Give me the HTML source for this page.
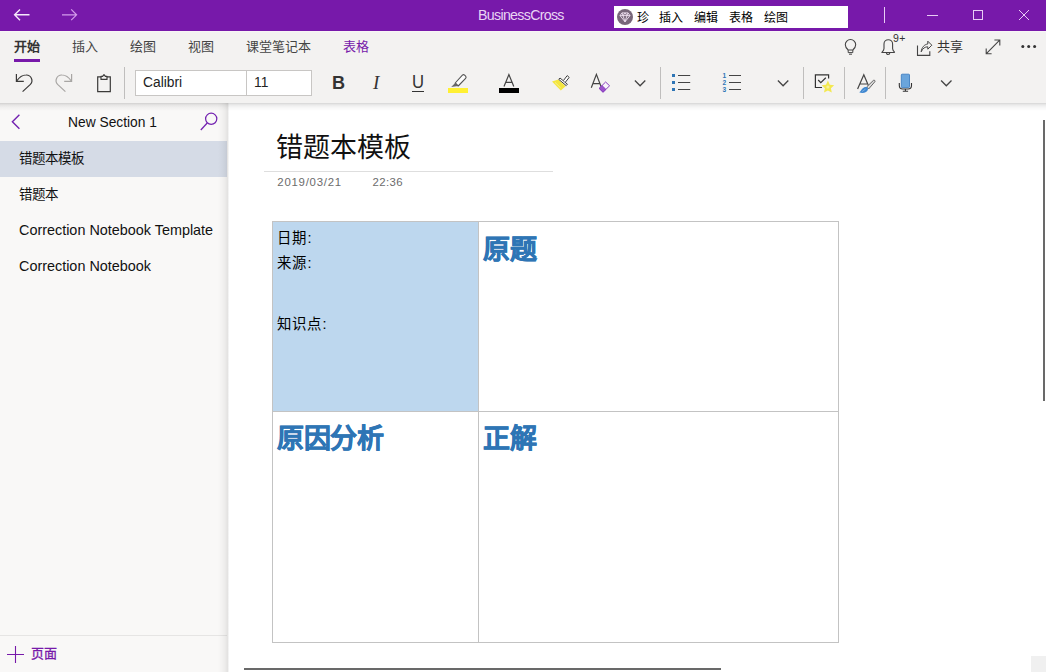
<!DOCTYPE html>
<html lang="zh-CN">
<head>
<meta charset="utf-8">
<title>OneNote</title>
<style>
*{box-sizing:border-box;margin:0;padding:0}
html,body{width:1046px;height:672px;overflow:hidden;background:#fff}
body{font-family:"Liberation Sans",sans-serif;position:relative;color:#000}
.abs{position:absolute}
svg{position:absolute;overflow:visible}
/* title bar */
#titlebar{position:absolute;left:0;top:0;width:1046px;height:31px;background:#7719aa}
#apptitle{position:absolute;left:478px;top:7.4px;font-size:14.2px;line-height:16px;color:#e9d4f4;letter-spacing:-0.68px}
#gem{position:absolute;left:614px;top:6px;width:234px;height:21.7px;background:#fff;font-size:12px;line-height:21px;color:#000}
#gem span{position:absolute;top:1.5px;white-space:nowrap}
/* ribbon */
#ribbon{position:absolute;left:0;top:31px;width:1046px;height:72px;background:#f3f2f1}
#ribbonshadow{position:absolute;left:0;top:103px;width:1046px;height:8px;background:linear-gradient(rgba(0,0,0,0.16),rgba(0,0,0,0.08) 25%,rgba(0,0,0,0.035) 55%,rgba(0,0,0,0));z-index:4}
.tab{position:absolute;top:39px;font-size:13px;line-height:16px;color:#444;white-space:nowrap}
#tabline{position:absolute;left:14px;top:59px;width:26px;height:3px;background:#7719aa}
.inp{position:absolute;top:70px;height:26px;background:#fff;border:1px solid #c8c6c4;font-size:13.8px;line-height:23px;color:#222;padding-left:7px}
.vsep{position:absolute;top:67px;width:1px;height:32px;background:#bfbebd}
/* sidebar */
#sidebar{position:absolute;left:0;top:103px;width:228px;height:569px;background:#f9f8f7}
#sideshadow{position:absolute;left:218px;top:103px;width:11px;height:569px;background:linear-gradient(90deg,rgba(0,0,0,0) 0,rgba(0,0,0,0.025) 36%,rgba(0,0,0,0.05) 64%,rgba(0,0,0,0.085) 86%,rgba(0,0,0,0.07) 91%,rgba(0,0,0,0.02) 100%);z-index:3}
#sectitle{position:absolute;left:0;top:114px;width:225px;text-align:center;font-size:13.8px;line-height:17px;color:#111}
#sel{position:absolute;left:0;top:141px;width:227px;height:36px;background:#d5dbe6}
.pg{position:absolute;left:19px;font-size:13.5px;line-height:17px;color:#111;white-space:nowrap}
#sidefoot{position:absolute;left:0;top:635px;width:227px;height:1px;background:#e6e5e4}
/* page */
#ptitle{position:absolute;left:276px;top:130px;font-size:27px;line-height:36px;color:#111;white-space:nowrap}
#ptline{position:absolute;left:264px;top:171px;width:289px;height:1px;background:#dedede}
.meta{position:absolute;top:176.4px;font-size:11.4px;line-height:13px;color:#6c6c6c;white-space:nowrap;letter-spacing:0.75px}
#tbl{position:absolute;left:272px;top:221px;width:567px;height:422px;border:1px solid #c3c3c3;background:#fff}
#cellblue{position:absolute;left:273px;top:222px;width:205px;height:189px;background:#bdd7ee}
#tv{position:absolute;left:478px;top:222px;width:1px;height:420px;background:#c3c3c3}
#th{position:absolute;left:273px;top:411px;width:565px;height:1px;background:#c3c3c3}
.ct{position:absolute;left:277px;font-size:14.4px;letter-spacing:1px;line-height:18px;color:#000;white-space:nowrap}
.hd{position:absolute;font-size:27px;line-height:32px;font-weight:bold;color:#2e75b5;-webkit-text-stroke:0.55px #2e75b5;white-space:nowrap;letter-spacing:-0.3px}
#hscroll{position:absolute;left:244px;top:668px;width:477px;height:2px;background:#696969}
#vscroll{position:absolute;left:1043px;top:120px;width:2px;height:281px;background:#696969}
#corner{position:absolute;left:1031px;top:656px;width:15px;height:16px;background:#f0f0f0}
</style>
</head>
<body>
<div id="titlebar"></div>
<div id="apptitle">BusinessCross</div>
<div id="gem"><span style="left:22.6px">珍</span><span style="left:44.6px">插入</span><span style="left:79.6px">编辑</span><span style="left:114.6px">表格</span><span style="left:149.6px">绘图</span></div>


<svg id="tbicons" style="left:0;top:0" width="1046" height="31" viewBox="0 0 1046 31" fill="none" stroke-linecap="butt">
 <g stroke="#f6e9fb" stroke-width="1.4">
  <path d="M29.5 14.8H14.8M20 9.4L14.6 14.8L20 20.2"/>
 </g>
 <g stroke="#d49ceb" stroke-width="1.2">
  <path d="M62 14.8H76.4M71.2 9.4L76.6 14.8L71.2 20.2"/>
 </g>
 <g stroke="#e8ccf5" stroke-width="1">
  <path d="M884.5 7V23"/>
  <path d="M927 15.5H938"/>
  <rect x="973.5" y="10.5" width="9" height="9"/>
  <path d="M1019 10L1029 20M1029 10L1019 20"/>
 </g>
</svg>
<svg id="gemicon" style="left:617px;top:9px" width="16" height="16" viewBox="0 0 16 16">
 <circle cx="8" cy="8" r="8" fill="#78677a"/>
 <path d="M3 6.6L5 3.9H11L13 6.6L8 12.8ZM3 6.6H13M6 6.6L8 12.8L10 6.6M5 3.9L6 6.6L8 3.9L10 6.6L11 3.9" fill="none" stroke="#f4e6f6" stroke-width="0.85" stroke-linejoin="round"/>
</svg>
<div id="ribbon"></div>
<div id="ribbonshadow"></div>
<div class="abs" style="left:0;top:31px;width:1046px;height:1px;background:#f8f5f6"></div>
<div class="tab" style="left:14px;font-weight:bold;color:#333">开始</div>
<div class="tab" style="left:72px">插入</div>
<div class="tab" style="left:130px">绘图</div>
<div class="tab" style="left:188px">视图</div>
<div class="tab" style="left:246px">课堂笔记本</div>
<div class="tab" style="left:343px;color:#7719aa">表格</div>
<div id="tabline"></div>
<div class="inp" style="left:135px;width:112px">Calibri</div>
<div class="inp" style="left:246px;width:66px">11</div>
<div class="vsep" style="left:124px"></div>


<svg id="rbicons" style="left:0;top:31px" width="1046" height="72" viewBox="0 31 1046 72" fill="none">
 <!-- right side tab-row icons -->
 <g stroke="#444" stroke-width="1.1">
  <path d="M848.2 50C846.2 48.2 845.3 46.6 845.3 44.7A5.2 5.2 0 0 1 855.7 44.7C855.7 46.6 854.8 48.2 852.8 50"/>
  <path d="M848.2 50H852.8V52.6H848.2Z" stroke-width="1"/>
  <path d="M849 54.2H852" stroke-width="1"/>
  <path d="M881.4 52.5H894.8M881.8 52.4C883 51.2 884 50.4 884 48.6V44A4.3 4.3 0 0 1 892.6 44V48.6C892.6 50.4 893.6 51.2 894.8 52.4" stroke-linejoin="round"/>
  <path d="M886.4 52.8A1.7 1.7 0 0 0 889.8 52.8"/>
  <path d="M917.5 45.4V55.4H929.8V51.2"/>
  <path d="M921.2 51.8C921.6 47.4 924.4 44.4 927.8 44V41.2L931.8 45.2L927.8 49.2V46.8C925 46.8 922.8 48.2 921.2 51.8Z" stroke-linejoin="round" stroke-width="1"/>
  <path d="M986.6 53.4L999.4 40.4M994.4 40H999.8V45.4M986.2 48.4V53.8H991.6"/>
 </g>
 <g fill="#333"><circle cx="1022.8" cy="46.4" r="1.5"/><circle cx="1028.7" cy="46.4" r="1.5"/><circle cx="1034.6" cy="46.4" r="1.5"/></g>
 <!-- undo / redo / clipboard -->
 <g stroke="#3b3a39" stroke-width="1.2">
  <path d="M16.4 74V81.4H23.8"/>
  <path d="M16.6 81.2C19 77.6 22.4 75 26 75A5.6 5.6 0 0 1 30.4 84.4L22.6 91.6"/>
 </g>
 <g stroke="#a8a6a4" stroke-width="1.2">
  <path d="M71.6 74V81.4H64.2"/>
  <path d="M71.4 81.2C69 77.6 65.6 75 62 75A5.6 5.6 0 0 0 57.6 84.4L65.4 91.6"/>
 </g>
 <g stroke="#3b3a39" stroke-width="1.2">
  <path d="M101 76.8H97.7V91.6H110.3V76.8H107"/>
  <path d="M101 79.4V76.4H102.6L104 74.6L105.4 76.4H107V79.4Z" stroke-linejoin="round"/>
 </g>
 <!-- highlighter -->
 <rect x="448" y="88" width="20" height="5" fill="#fff033"/>
 <g stroke="#555" stroke-width="1.1" stroke-linejoin="round">
  <path d="M455.2 83L462.4 75.2A1.6 1.6 0 0 1 464.6 75.2L465.6 76.2A1.6 1.6 0 0 1 465.6 78.4L458.2 86Z" fill="#fdfdfd"/>
 </g>
 <path d="M455.2 83L458.2 86L451.2 87Z" fill="#666"/>
 <!-- font colour -->
 <rect x="499" y="88" width="20" height="5" fill="#000"/>
 <path d="M504 86.6L508.9 74.6L513.8 86.6M505.8 82.4H512" stroke="#444" stroke-width="1.2"/>
 <!-- format painter -->
 <path d="M552 81.6L558.4 79.6L565.6 86.2L560.8 90.6Z" fill="#f4e640"/>
 <path d="M555 82.4L560.6 87.8" stroke="#f9f3a8" stroke-width="0.8"/>
 <g stroke="#3f3f3f" stroke-width="1" stroke-linejoin="round">
  <path d="M558.8 79.4L560 78L567.4 84.2L566.2 85.6Z" fill="#fff"/>
  <path d="M563.4 80.6L567.2 75.6L569.2 77.4L565.4 82.2" fill="#fff"/>
 </g>
 <!-- clear formatting A + eraser -->
 <path d="M591.3 87.7L596.4 74.4L601.5 87.7M593 83.7H599.8" stroke="#444" stroke-width="1.2"/>
 <g stroke="#8a3fbf" stroke-width="1" stroke-linejoin="round">
  <path d="M599.2 88.4L605.6 82L609.6 85.8L603 92.2Z" fill="#f8f4fb"/>
  <path d="M599.2 88.4L602 85.6L605.9 89.4L603 92.2Z" fill="#9a52cc"/>
 </g>
 <!-- chevrons -->
 <g stroke="#444" stroke-width="1.3">
  <path d="M634.9 80.5L640.1 85.8L645.3 80.5"/>
  <path d="M777.9 80.5L783.1 85.8L788.3 80.5"/>
  <path d="M941.1 80.5L946.3 85.8L951.5 80.5"/>
 </g>
 <!-- bullet list -->
 <g fill="#2e75b5"><rect x="672" y="74" width="3" height="3"/><rect x="672" y="81" width="3" height="3"/><rect x="672" y="88" width="3" height="3"/></g>
 <g stroke="#444" stroke-width="1.1"><path d="M678 75.5H690.2M678 82.5H690.2M678 89.5H690.2"/></g>
 <!-- numbered list -->
 <g stroke="#444" stroke-width="1.1"><path d="M729 75.5H741M729 82.5H741M729 89.5H741"/></g>
 <g fill="#2e75b5" font-family="Liberation Sans, sans-serif" font-size="6.6" font-weight="bold"><text x="722.4" y="77.9">1</text><text x="722.4" y="84.9">2</text><text x="722.4" y="91.9">3</text></g>
 <!-- todo tag -->
 <path d="M828.6 78.4V74.9H815.4V87.5H822" stroke="#333" stroke-width="1.2"/>
 <path d="M818.2 80L820.8 82.6L825.8 77.8" stroke="#333" stroke-width="1.2"/>
 <path d="M827.9 80.6L829.8 84.7L834.2 85.2L830.9 88.2L831.8 92.6L827.9 90.4L824 92.6L824.9 88.2L821.6 85.2L826 84.7Z" fill="#f3e84f"/>
 <circle cx="827.9" cy="87" r="1.6" fill="#f8f19a"/>
 <!-- ink to text A + brush -->
 <path d="M857.6 89L863.8 74.8L868.6 86M859.8 84H867" stroke="#444" stroke-width="1.2"/>
 <path d="M866.6 87L873.4 80.4C874.2 79.6 875.6 80.8 874.8 81.8L868.6 89Z" fill="#dcdcdc" stroke="#555" stroke-width="0.9" stroke-linejoin="round"/>
 <path d="M859.2 92.2C860.8 91.4 861.2 89.4 862.8 88.2C864.2 87.2 866.4 86.6 867.4 87.6C868.6 88.8 868 90.8 866 92C864 93.2 861 93.2 859.2 92.2Z" fill="#3f87d0"/>
 <path d="M862 91.6L865.6 89" stroke="#8fbde8" stroke-width="0.7"/>
 <!-- dictate mic -->
 <rect x="901.3" y="74.2" width="8.2" height="13.4" rx="0.8" fill="#6aa5dc" stroke="#3f7fc2" stroke-width="0.9"/>
 <path d="M899.3 83V85.6A3.4 3.4 0 0 0 902.7 89H908.1A3.4 3.4 0 0 0 911.5 85.6V83M905.4 89V91M902.8 91.2H908.1" stroke="#333" stroke-width="1.1"/>
</svg>
<div class="abs" style="left:331.6px;top:72px;font-size:19px;line-height:21px;font-weight:bold;color:#333;transform:scaleX(0.95);transform-origin:0 0">B</div>
<div class="abs" style="left:373px;top:71.5px;font-size:19px;line-height:22px;font-style:italic;font-family:'Liberation Serif',serif;color:#333">I</div>
<div class="abs" style="left:411.6px;top:72px;font-size:18.5px;line-height:20px;color:#333;transform:scaleX(0.9);transform-origin:0 0">U</div>
<div class="abs" style="left:412px;top:90.5px;width:12px;height:1.2px;background:#333"></div>
<div class="abs" style="left:893px;top:32px;font-size:10.5px;line-height:12px;color:#333;letter-spacing:0.4px">9+</div>
<div class="abs" style="left:937px;top:39px;font-size:13px;line-height:16px;color:#333">共享</div>
<div class="vsep" style="left:660px"></div>
<div class="vsep" style="left:803px"></div>
<div class="vsep" style="left:844px"></div>
<div class="vsep" style="left:885px"></div>
<div id="sidebar"></div>
<div id="sideshadow"></div>
<div id="sectitle">New Section 1</div>
<div id="sel"></div>
<div class="pg" style="top:150px">错题本模板</div>
<div class="pg" style="top:186px">错题本</div>
<div class="pg" style="top:222px;font-size:14.4px">Correction Notebook Template</div>
<div class="pg" style="top:258px;font-size:14.4px">Correction Notebook</div>
<div id="sidefoot"></div>


<svg style="left:0;top:104px" width="230" height="568" viewBox="0 104 230 568" fill="none">
 <path d="M19.4 114.8L12.4 121.8L19.4 128.8" stroke="#7322b0" stroke-width="1.4"/>
 <circle cx="211.2" cy="118.8" r="5.6" stroke="#7322b0" stroke-width="1.25"/>
 <path d="M207.2 123L200.8 130" stroke="#7322b0" stroke-width="1.25"/>
 <path d="M7 654.5H24M15.5 646V663" stroke="#7719aa" stroke-width="1.1"/>
</svg>
<div class="abs" style="left:30.5px;top:645.6px;font-size:13px;line-height:16px;color:#7719aa;-webkit-text-stroke:0.3px #7719aa">页面</div>
<div id="ptitle">错题本模板</div>
<div id="ptline"></div>
<div class="meta" style="left:277.3px">2019/03/21</div>
<div class="meta" style="left:372.4px;letter-spacing:0.45px">22:36</div>
<div id="tbl"></div>
<div id="cellblue"></div>
<div id="tv"></div>
<div id="th"></div>
<div class="ct" style="top:229px">日期<span style="margin-left:0.5px">:</span></div>
<div class="ct" style="top:254px">来源<span style="margin-left:0.5px">:</span></div>
<div class="ct" style="top:315px">知识点<span style="margin-left:0.5px">:</span></div>
<div class="hd" style="left:483px;top:234px">原题</div>
<div class="hd" style="left:277px;top:423px">原因分析</div>
<div class="hd" style="left:483px;top:423px">正解</div>
<div id="hscroll"></div>
<div id="vscroll"></div>
<div id="corner"></div>
</body>
</html>
